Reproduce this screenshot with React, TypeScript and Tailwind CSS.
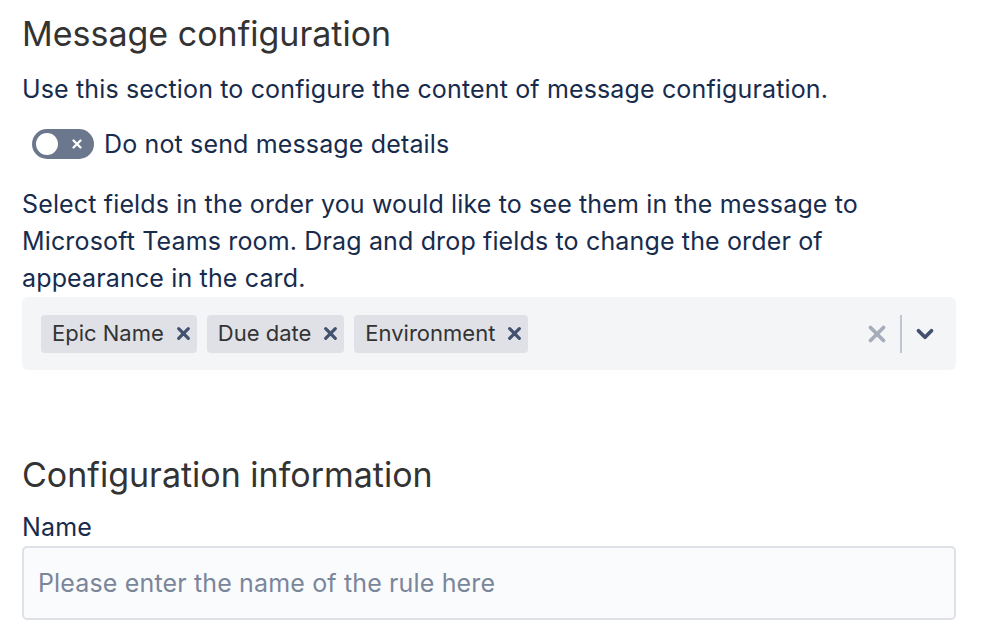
import { X, ChevronDown } from "lucide-react";

const tags = ["Epic Name", "Due date", "Environment"];

function SmallX({ className }: { className?: string }) {
  return (
    <svg viewBox="0 0 14 14" className={className} fill="none" stroke="currentColor" strokeWidth={3} strokeLinecap="round">
      <path d="M2.5 2.5l9 9M11.5 2.5l-9 9" />
    </svg>
  );
}

export default function App() {
  return (
    <div
      className="min-h-screen bg-white px-[22px] pt-[12px] text-[#172B4D]"
      style={{ fontFamily: "Inter, 'Noto Sans', sans-serif" }}
    >
      {/* Message configuration */}
      <h2 className="text-[34px] leading-[44px] font-normal text-[#333333]">
        Message configuration
      </h2>
      <p className="mt-[17px] text-[25px] leading-[32px] tracking-[0.15px]">
        Use this section to configure the content of message configuration.
      </p>

      <label className="mt-[23px] flex items-center gap-[10px] pl-[10px]">
        <span className="relative flex h-[30px] w-[62px] items-center rounded-full bg-[#6B778C]">
          <span className="absolute left-[4px] h-[22px] w-[22px] rounded-full bg-white" />
          <X className="absolute right-[10px] h-[14px] w-[14px] text-white" strokeWidth={4} />
        </span>
        <span className="text-[25px] leading-[32px] tracking-[0.15px]">Do not send message details</span>
      </label>

      <p className="mt-[26px] w-[880px] text-[25px] leading-[37px] tracking-[0.15px]">
        Select fields in the order you would like to see them in the message to Microsoft Teams
        room. Drag and drop fields to change the order of appearance in the card.
      </p>

      {/* Field multi-select */}
      <div className="mt-0 flex h-[73px] w-[934px] items-center rounded-[6px] bg-[#F4F5F7] pl-[19px] pr-[18px]">
        <div className="flex flex-1 items-center gap-[10px]">
          {tags.map((t) => (
            <span
              key={t}
              className="flex h-[38px] items-center gap-[12px] rounded-[4px] bg-[#DFE1E6] pl-[11px] pr-[6px] text-[22px] text-[#333333]"
            >
              {t}
              <SmallX className="h-[15px] w-[15px] text-[#42526E]" />
            </span>
          ))}
        </div>
        <X className="h-[26px] w-[26px] text-[#A5ADBA]" strokeWidth={3.5} />
        <span className="mx-[10px] h-[38px] w-[2px] bg-[#C1C7D0]" />
        <ChevronDown className="h-[26px] w-[26px] text-[#42526E]" strokeWidth={3.5} />
      </div>

      {/* Configuration information */}
      <h2 className="mt-[83px] text-[34px] leading-[44px] font-normal text-[#333333]">
        Configuration information
      </h2>
      <div className="mt-[14px] text-[25px] leading-[32px] tracking-[0.15px]">Name</div>
      <input
        className="mt-[3px] h-[74px] w-[934px] rounded-[5px] border-2 border-[#DFE1E6] bg-[#FAFBFC] px-[14px] text-[25px] tracking-[0.15px] text-[#172B4D] outline-none placeholder:text-[#7A869A]"
        placeholder="Please enter the name of the rule here"
      />
    </div>
  );
}
